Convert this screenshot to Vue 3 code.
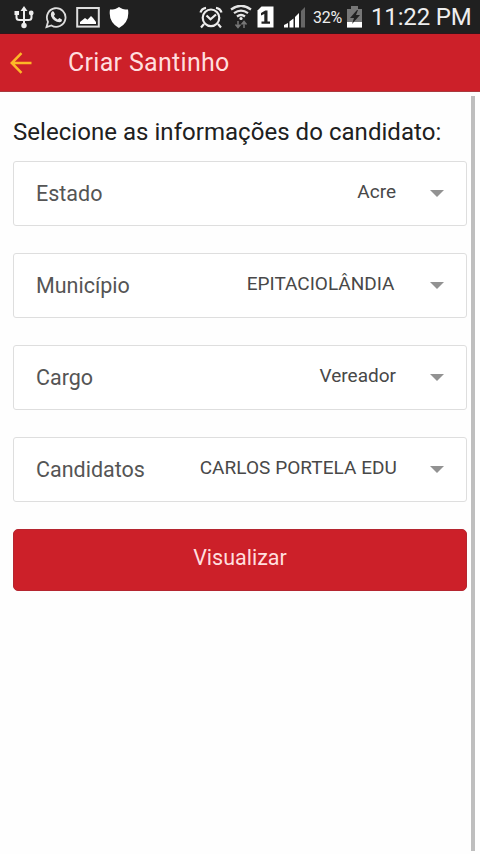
<script setup>
const fields = [
  { label: 'Estado', value: 'Acre', cls: 'acre' },
  { label: 'Município', value: 'EPITACIOLÂNDIA', cls: 'city' },
  { label: 'Cargo', value: 'Vereador', cls: 'role' },
  { label: 'Candidatos', value: 'CARLOS PORTELA EDU', cls: 'name' },
]
</script>

<template>
  <div class="screen">
    <div class="status">
      <div class="left">
        <svg width="20" height="24" viewBox="0 0 20 24" fill="none" stroke="#eee" stroke-width="2">
          <path d="M10 4v15M2.500 8v4.500q0 2.500 3 2.500h9q3 0 3-2.500V8" />
          <path d="M10 1l3.500 5h-7z M0.500 6h4.500v4H0.500z" fill="#eee" stroke="none" />
          <circle cx="17.200" cy="8" r="2.400" fill="#eee" stroke="none" />
          <circle cx="10" cy="20.500" r="2.700" fill="#eee" stroke="none" />
        </svg>
        <svg width="22" height="24" viewBox="0 0 22 24">
          <path d="M1.500 22L3 16.800A9.300 9.300 0 1 1 6.400 20.400Z" fill="none" stroke="#ddd" stroke-width="1.800" />
          <path d="M6.200 7.700Q7.500 5.500 8.800 6.700L10 9.300L8.900 10.900Q10.500 13.500 12.800 14.400L14.300 13L16.900 14.400Q17.200 17 14.500 17.200Q8.700 16.900 6.200 11.500Q5.500 9.200 6.200 7.700Z" fill="#e8e8e8" />
        </svg>
        <svg width="24" height="24" viewBox="0 0 24 24">
          <rect x="1.200" y="3" width="21.600" height="18.600" fill="none" stroke="#ddd" stroke-width="2" />
          <path d="M4 19v-2l5-4 2.500 1.800L15 11l2 2 3 4v2z" fill="#fff" />
        </svg>
        <svg width="20" height="24" viewBox="0 0 20 24">
          <path d="M10 2Q13 4.500 19 4.600Q21 17 10 23Q-1 17 1 4.600Q7 4.500 10 2Z" fill="#fff" />
        </svg>
      </div>
      <svg class="alarm" width="24" height="24" viewBox="0 0 24 24" fill="none" stroke="#eee" stroke-width="2.200">
        <circle cx="12" cy="12.800" r="8.300" />
        <path d="M1.500 7.500Q2.500 3.500 7 2.800M22.500 7.500Q21.500 3.500 17 2.800M5 19l-3 3.500M19 19l3 3.500M7.500 10.500l4 3.800L17 9.500" />
      </svg>
      <svg class="wifi" width="22" height="24" viewBox="0 0 22 24" fill="none">
        <path d="M1 4.500Q11-3 21 4.500M4 8.200Q11 3 18 8.200M7 11.500Q11 8.500 15 11.500" stroke="#e5e5e5" stroke-width="2.200" />
        <circle cx="11" cy="13.500" r="1.600" fill="#eee" />
        <path d="M8 16v6M5.500 19.500L8 22.500l2.500-3M14 23v-6M11.500 19.500L14 16.500l2.500 3" stroke="#777" stroke-width="1.500" />
      </svg>
      <svg class="sim" width="17" height="24" viewBox="0 0 17 24">
        <path d="M4.500 1.500H16.500V22.500H0.500V5.500Z" fill="#fff" />
        <path d="M4 8L8.300 5.500H10.500V16.500H13V18.800H4.500V16.500H7.300V9L4 10.500Z" fill="#222" />
      </svg>
      <svg class="signal" width="23" height="24" viewBox="0 0 23 24">
        <path d="M1 22.500v-2.500l4-2v4.500zM6.500 22.500v-6l4-3v9zM12 22.500V12l4-4v14.500z" fill="#fff" />
        <path d="M18 22.500V6l4-4v20.500z" fill="#666" />
      </svg>
      <span class="pct">32%</span>
      <svg class="battery" width="17" height="24" viewBox="0 0 17 24">
        <path d="M1 4h4V1h7v3h4v18.500H1z" fill="#777" />
        <path d="M1 17h15v5.500H1z" fill="#fff" />
        <path d="M11 5L4 13h4l-2 6 8-9h-4l2-5z" fill="#222" />
      </svg>
      <span class="time">11:22 PM</span>
    </div>
    <header class="bar">
      <svg width="22" height="22" viewBox="0 0 22 22" fill="none" stroke="#fdb827" stroke-width="2.500">
        <path d="M21.500 11H2M11.500 1.200L1.800 11l9.700 9.800" />
      </svg>
      <h1>Criar Santinho</h1>
    </header>
    <div class="body">
      <main>
        <p class="prompt">Selecione as informações do candidato:</p>
        <div v-for="f in fields" :key="f.label" class="field">
          <span class="label">{{ f.label }}</span>
          <span class="value" :class="f.cls">{{ f.value }}</span>
          <i class="caret"></i>
        </div>
        <button>Visualizar</button>
      </main>
      <div class="scroll"></div>
    </div>
  </div>
</template>

<style>
body { margin: 0; background: #fefefe; }
</style>

<style scoped>
* { box-sizing: border-box; }
.screen { width: 480px; height: 854px; display: flex; flex-direction: column; background: #fefefe; font-family: Roboto, sans-serif; overflow: hidden; }
.status { height: 34px; flex: none; background: #202020; border-bottom: 1px solid #32151b; display: flex; align-items: center; padding-left: 14px; color: #eee; white-space: nowrap; }
.status svg { flex: none; }
.left { display: flex; gap: 10px; width: 185px; }
.left svg:nth-child(2) { margin-left: 1px; }
.left svg:nth-child(3) { margin-left: -1px; }
.left svg:nth-child(4) { margin-left: -1px; }
.wifi { margin-left: 7px; }
.sim { margin-left: 5px; }
.signal { margin-left: 9px; }
.pct { font-size: 16px; width: 33px; margin-left: 7px; padding-top: 2px; letter-spacing: -0.2px; }
.time { margin-left: 8px; font-size: 24px; line-height: 30px; padding-top: 1px; letter-spacing: -0.15px; }
.bar { height: 58px; flex: none; background: #cc2029; border-bottom: 1px solid #a93a3e; display: flex; align-items: center; padding-left: 10px; }
.bar svg { margin-top: 1px; }
h1 { margin: 0 0 0 36px; font-size: 25px; letter-spacing: 0.3px; font-weight: 400; line-height: 30px; color: #ffdede; }
.body { flex: 1; display: flex; padding-top: 4px; }
main { width: 471px; padding: 21px 4px 0 13px; }
.scroll { width: 4px; height: 755px; background: #bebebe; }
.prompt { margin: 0 0 13px; height: 31px; font-size: 24px; line-height: 31px; letter-spacing: 0.04px; color: #202020; white-space: nowrap; }
.field { height: 65px; margin-bottom: 27px; border: 1.500px solid #dedede; border-radius: 3px; display: flex; align-items: center; padding: 0 22px; color: #555; background: #fff; white-space: nowrap; }
.label { font-size: 21.500px; line-height: 30px; padding-top: 1px; }
.value { margin-left: auto; font-size: 19px; line-height: 26px; padding-bottom: 3px; color: #484848; }
.city { margin-right: 1.500px; }
.name { margin-right: -1px; letter-spacing: 0.05px; }
.caret { width: 0; height: 0; margin-left: 34px; border: 7px solid transparent; border-top-color: #929292; border-bottom: 0; }
button { display: block; width: 454px; height: 62px; border: 1px solid #b52630; border-radius: 5px; background: #cc2029; color: #ffdede; font: 21.500px/30px Roboto, sans-serif; padding: 0 0 4px; }
</style>
